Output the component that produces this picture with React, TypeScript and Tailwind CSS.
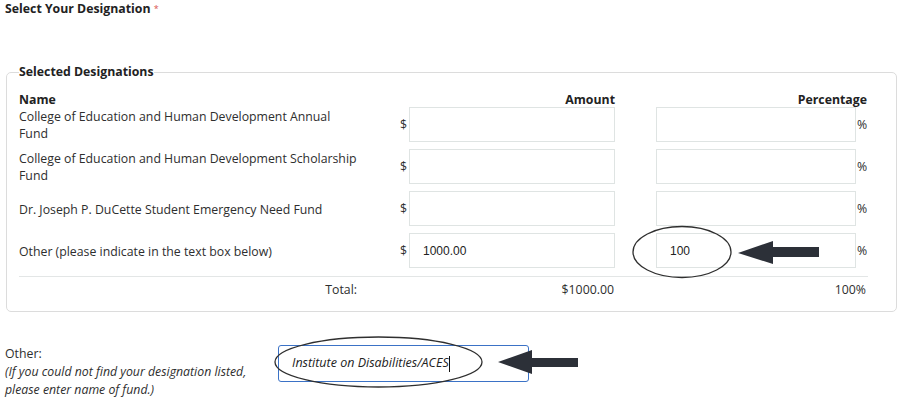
import React from 'react';

const rows = [
  { name: 'College of Education and Human Development Annual Fund', amount: '', pct: '' },
  { name: 'College of Education and Human Development Scholarship Fund', amount: '', pct: '' },
  { name: 'Dr. Joseph P. DuCette Student Emergency Need Fund', amount: '', pct: '' },
  { name: 'Other (please indicate in the text box below)', amount: '1000.00', pct: '100' },
];

const font = { fontFamily: '"Open Sans", "Liberation Sans", sans-serif' };
const arial = { fontFamily: '"Liberation Sans", Arial, sans-serif' };

export default function App() {
  return (
    <div className="relative w-[900px] h-[401px] overflow-hidden bg-white text-[12.3px] text-[#2e2e2e]" style={font}>
      {/* Title */}
      <div className="pl-[5px] leading-[18px] font-bold text-[#222]">
        Select Your Designation <span className="text-[#d9534f] font-normal text-[9px] align-top">*</span>
      </div>

      {/* Selected designations */}
      <fieldset className="mt-[46px] ml-[6px] mr-[3px] border border-[#dcdcdc] rounded-[5px] pl-[12px] pr-[28px] pb-[13px]">
        <legend className="font-bold text-[#222] leading-[16px] px-0">Selected Designations</legend>

        <div className="grid grid-cols-[340px_50px_206px_41px_200px_12px] items-center pt-[12px]">
          <div className="font-bold text-[#222] leading-[15px]">Name</div>
          <div />
          <div className="font-bold text-[#222] leading-[15px] text-right">Amount</div>
          <div />
          <div className="col-span-2 font-bold text-[#222] leading-[15px] text-right pr-[1px]">Percentage</div>
        </div>

        <div className="flex flex-col gap-[7px]">
          {rows.map((r, i) => (
            <div key={i} className="grid grid-cols-[340px_50px_206px_41px_200px_12px] items-center">
              <div className="leading-[17px] pt-[1px]">{r.name}</div>
              <div className="text-right pr-[2px] pt-[2px]">$</div>
              <div className="h-[35px] border border-[#dfe4e3] flex items-center pl-[13px] text-[12px] text-[#222]" style={arial}>
                {r.amount}
              </div>
              <div />
              <div className="h-[35px] border border-[#dfe4e3] flex items-center pl-[13px] text-[12px] text-[#222]" style={arial}>
                {r.pct}
              </div>
              <div className="pl-[1px] pt-[2px]">%</div>
            </div>
          ))}
        </div>

        <div className="mt-[8px] border-t border-[#e3e6e6] pt-[5px] grid grid-cols-[340px_50px_206px_41px_200px_12px] leading-[16px]">
          <div className="text-right pr-[2px]">Total:</div>
          <div />
          <div className="text-right pr-[1px]">$1000.00</div>
          <div />
          <div className="col-span-2 text-right pr-[2px]">100%</div>
        </div>
      </fieldset>

      {/* Other */}
      <div className="flex items-start mt-[33px] pl-[5px]">
        <div className="w-[273px] leading-[18px]">
          <div>Other:</div>
          <div className="italic">(If you could not find your designation listed,</div>
          <div className="italic">please enter name of fund.)</div>
        </div>
        <div className="w-[251px] h-[37px] border-[1.5px] border-[#3b72c6] rounded-[3px] flex items-center pl-[13px] italic text-[12.5px] text-[#222]">
          Institute on Disabilities/ACES<span className="inline-block w-[1px] h-[16px] bg-[#111]" />
        </div>
      </div>

      {/* Annotations */}
      <svg className="absolute inset-0 pointer-events-none" width="900" height="401" viewBox="0 0 900 401">
        <ellipse cx="682" cy="252" rx="49" ry="25.5" fill="none" stroke="#2f2f2f" strokeWidth="1.3" />
        <polygon points="738,253 773,241 773,247 819,247 819,257 773,257 773,264" fill="#2c3038" />
        <ellipse cx="378.5" cy="362" rx="103.5" ry="25" fill="none" stroke="#2f2f2f" strokeWidth="1.3" />
        <polygon points="498,362 532,350 532,358 578,358 578,367 532,367 532,374" fill="#2c3038" />
      </svg>
    </div>
  );
}
